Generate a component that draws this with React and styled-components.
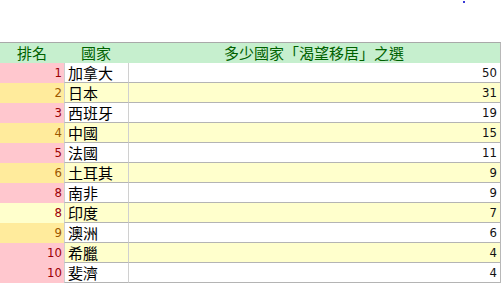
import React from "react";
import styled, { createGlobalStyle } from "styled-components";

const Global = createGlobalStyle`
  html, body { margin: 0; padding: 0; background: #ffffff; }
  body { font-family: "Noto Sans CJK TC", "Noto Sans", sans-serif; }
`;

const Page = styled.div`
  width: 501px;
  height: 283px;
  overflow: hidden;
  background: #ffffff;
`;

const TopArea = styled.div`
  height: 42px;
  box-sizing: border-box;
  padding: 1px 0 0 463px;
  display: flex;
  align-items: flex-start;
`;

const Dot = styled.span`
  display: block;
  width: 2px;
  height: 2px;
  background: #3a3ad6;
`;

const Sheet = styled.div`
  display: grid;
  grid-template-columns: 64px 64px 372px;
  width: 500px;
  border-top: 1px solid #a9a9a9;
  border-right: 1px solid #b8b8b8;
`;

const HeadCell = styled.div`
  height: 20px;
  background: #c6efce;
  color: #006100;
  font-family: "Noto Sans CJK TC", sans-serif;
  font-size: 15px;
  line-height: 20px;
  text-align: center;
  white-space: nowrap;
  overflow: hidden;
`;

const tones = {
  bad: { bg: "#ffc7ce", fg: "#9c0006" },
  neutral: { bg: "#ffeb9c", fg: "#9c5700" },
  plain: { bg: "#ffffcc", fg: "#9c0006" },
};

const RankCell = styled.div`
  height: 20px;
  box-sizing: border-box;
  padding-right: 2px;
  background: ${(p) => tones[p.$tone].bg};
  color: ${(p) => tones[p.$tone].fg};
  font-family: "DejaVu Sans Condensed", "DejaVu Sans", sans-serif;
  font-size: 13px;
  line-height: 20px;
  text-align: right;
`;

const DataCell = styled.div`
  height: 20px;
  box-sizing: border-box;
  border-left: 1px solid #d0d0d0;
  border-bottom: 1px solid #b4b4b4;
  background: ${(p) => (p.$stripe ? "#ffffcc" : "#ffffff")};
  color: #000000;
  white-space: nowrap;
  overflow: hidden;
`;

const CountryCell = styled(DataCell)`
  padding-left: 3px;
  font-family: "Noto Sans CJK TC", sans-serif;
  font-size: 15px;
  line-height: 19px;
`;

const ValueCell = styled(DataCell)`
  padding-right: 3px;
  text-align: right;
  font-family: "DejaVu Sans Condensed", "DejaVu Sans", sans-serif;
  font-size: 13px;
  line-height: 20px;
  color: #111111;
`;

const rows = [
  { rank: 1, tone: "bad", name: "加拿大", value: 50 },
  { rank: 2, tone: "neutral", name: "日本", value: 31 },
  { rank: 3, tone: "bad", name: "西班牙", value: 19 },
  { rank: 4, tone: "neutral", name: "中國", value: 15 },
  { rank: 5, tone: "bad", name: "法國", value: 11 },
  { rank: 6, tone: "neutral", name: "土耳其", value: 9 },
  { rank: 8, tone: "bad", name: "南非", value: 9 },
  { rank: 8, tone: "plain", name: "印度", value: 7 },
  { rank: 9, tone: "neutral", name: "澳洲", value: 6 },
  { rank: 10, tone: "bad", name: "希臘", value: 4 },
  { rank: 10, tone: "bad", name: "斐濟", value: 4 },
];

export default function App() {
  return (
    <Page>
      <Global />
      <TopArea>
        <Dot />
      </TopArea>
      <Sheet>
        <HeadCell>排名</HeadCell>
        <HeadCell>國家</HeadCell>
        <HeadCell>多少國家「渴望移居」之選</HeadCell>
        {rows.map((r, i) => {
          const stripe = i % 2 === 1;
          return (
            <React.Fragment key={i}>
              <RankCell $tone={r.tone}>{r.rank}</RankCell>
              <CountryCell $stripe={stripe}>{r.name}</CountryCell>
              <ValueCell $stripe={stripe}>{r.value}</ValueCell>
            </React.Fragment>
          );
        })}
      </Sheet>
    </Page>
  );
}
